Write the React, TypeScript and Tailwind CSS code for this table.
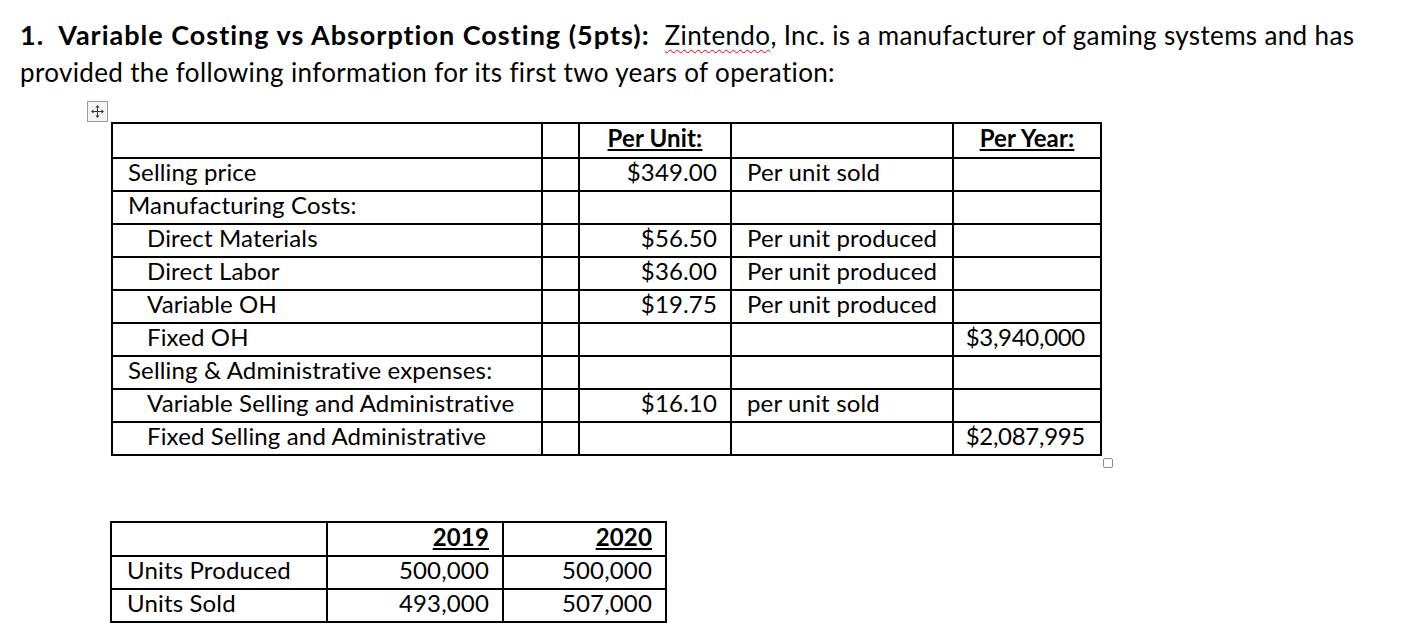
import React from "react";

type Row = {
  label: string;
  indent?: boolean;
  perUnit?: string;
  basis?: string;
  perYear?: string;
};

const rows: Row[] = [
  { label: "Selling price", perUnit: "$349.00", basis: "Per unit sold" },
  { label: "Manufacturing Costs:" },
  { label: "Direct Materials", indent: true, perUnit: "$56.50", basis: "Per unit produced" },
  { label: "Direct Labor", indent: true, perUnit: "$36.00", basis: "Per unit produced" },
  { label: "Variable OH", indent: true, perUnit: "$19.75", basis: "Per unit produced" },
  { label: "Fixed OH", indent: true, perYear: "$3,940,000" },
  { label: "Selling & Administrative expenses:" },
  { label: "Variable Selling and Administrative", indent: true, perUnit: "$16.10", basis: "per unit sold" },
  { label: "Fixed Selling and Administrative", indent: true, perYear: "$2,087,995" },
];

const units = [
  { label: "Units Produced", y2019: "500,000", y2020: "500,000" },
  { label: "Units Sold", y2019: "493,000", y2020: "507,000" },
];

const cell = "border-2 border-black pt-0 px-0 pb-[5px] align-middle";

function MoveHandle() {
  return (
    <div className="w-[21px] h-[21px] border border-[#9a9a9a] bg-[#f4f4f4] flex items-center justify-center">
      <svg width="15" height="15" viewBox="0 0 15 15" fill="none">
        <path d="M7.5 2v11M2 7.5h11" stroke="#333" strokeWidth="1" />
        <path d="M7.5 1 5.5 3.5h4zM7.5 14l-2-2.5h4zM1 7.5l2.5-2v4zM14 7.5l-2.5-2v4z" fill="#333" />
      </svg>
    </div>
  );
}

export default function App() {
  return (
    <div className="w-[1408px] h-[644px] bg-white text-black font-['Lato',sans-serif] pl-5 pt-[16px] overflow-hidden">
      <p className="text-[26px] leading-[37px] tracking-[0.35px] whitespace-nowrap">
        <span className="font-bold text-[27px] tracking-[1px]">1.&nbsp; Variable Costing vs Absorption Costing (5pts):</span>{" "}
        <span className="ml-[8px] underline decoration-wavy decoration-red-600 decoration-1 underline-offset-4">Zintendo</span>
        , Inc. is a manufacturer of gaming systems and has
      </p>
      <p className="text-[26px] leading-[37px] tracking-[0.35px] whitespace-nowrap">
        provided the following information for its first two years of operation:
      </p>

      <div className="ml-[67px] mt-[10px]">
        <MoveHandle />
      </div>

      <div className="flex items-end ml-[91px]">
        <table className="table-fixed border-collapse w-[991px] text-[24px] tracking-[0.15px]">
          <colgroup>
            <col className="w-[430px]" />
            <col className="w-[37px]" />
            <col className="w-[152px]" />
            <col className="w-[222px]" />
            <col className="w-[148px]" />
          </colgroup>
          <tbody>
            <tr className="h-[35px] leading-[22px]">
              <td className={cell} />
              <td className={cell} />
              <td className={`${cell} text-center font-bold`}>
                <span className="underline underline-offset-2">Per Unit:</span>
              </td>
              <td className={cell} />
              <td className={`${cell} text-center font-bold`}>
                <span className="underline underline-offset-2">Per Year:</span>
              </td>
            </tr>
            {rows.map((r) => (
              <tr key={r.label} className="h-[33px] leading-[22px]">
                <td className={`${cell} ${r.indent ? "pl-[34px]" : "pl-[15px]"} whitespace-nowrap`}>
                  {r.label}
                </td>
                <td className={cell} />
                <td className={`${cell} text-right pr-[13px]`}>{r.perUnit}</td>
                <td className={`${cell} pl-[15px] whitespace-nowrap`}>{r.basis}</td>
                <td className={`${cell} text-right pr-[15px] tracking-[-0.3px]`}>{r.perYear}</td>
              </tr>
            ))}
          </tbody>
        </table>
        <div className="w-[10px] h-[10px] border border-[#8a8a8a] rounded-[2px] bg-white ml-[1px] -mb-[12px]" />
      </div>

      <table className="table-fixed border-collapse w-[556px] text-[24px] tracking-[0.15px] ml-[90px] mt-[65px]">
        <colgroup>
          <col className="w-[216px]" />
          <col className="w-[176px]" />
          <col className="w-[163px]" />
        </colgroup>
        <tbody>
          <tr className="h-[34px] leading-[22px]">
            <td className={cell} />
            <td className={`${cell} text-right pr-[13px] font-bold`}>
              <span className="underline underline-offset-2">2019</span>
            </td>
            <td className={`${cell} text-right pr-[13px] font-bold`}>
              <span className="underline underline-offset-2">2020</span>
            </td>
          </tr>
          {units.map((u) => (
            <tr key={u.label} className="h-[33px] leading-[22px]">
              <td className={`${cell} pl-[15px] whitespace-nowrap`}>{u.label}</td>
              <td className={`${cell} text-right pr-[13px]`}>{u.y2019}</td>
              <td className={`${cell} text-right pr-[13px]`}>{u.y2020}</td>
            </tr>
          ))}
        </tbody>
      </table>
    </div>
  );
}
